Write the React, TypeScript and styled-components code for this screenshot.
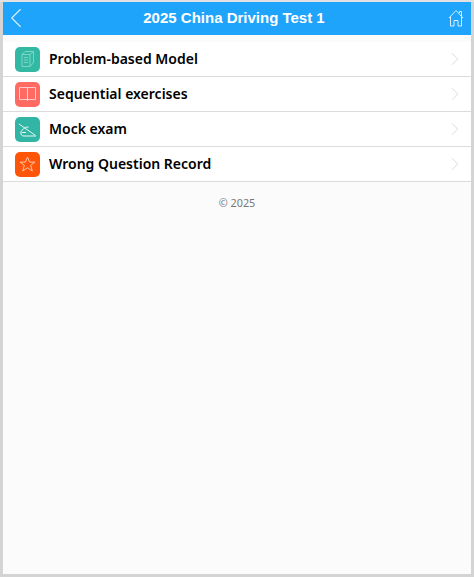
import React from 'react'
import styled, { createGlobalStyle } from 'styled-components'
import { ChevronLeft, ChevronRight } from 'lucide-react'

const BLUE = '#1fa4fc'
const LINE = '#dcdcdc'

const GlobalStyle = createGlobalStyle`
  html, body {
    margin: 0;
    padding: 0;
    height: 100%;
    background: #f1f1f1;
  }
  #root {
    height: 100%;
  }
`

const Frame = styled.div`
  box-sizing: border-box;
  width: 474px;
  height: 577px;
  padding: 0 3px 3px 3px;
  background: #d4d4d4;
  border-top: 2px solid #e2e2e2;
  overflow: hidden;
`

const Page = styled.div`
  height: 100%;
  display: flex;
  flex-direction: column;
  background: #fbfbfb;
`

const Header = styled.header`
  box-sizing: border-box;
  height: 33px;
  flex: none;
  display: flex;
  align-items: center;
  justify-content: space-between;
  padding: 0 3px 2px 1px;
  background: ${BLUE};
`

const Title = styled.h1`
  margin: 0 0 0 -4px;
  font: bold 15px 'Liberation Sans', Arial, sans-serif;
  color: #fff;
`

const HeaderButton = styled.span`
  width: 24px;
  height: 24px;
  display: flex;
  align-items: center;
  justify-content: center;
  color: #d8efff;
`

const BackArrow = styled(ChevronLeft)`
  flex: none;
`

const Menu = styled.ul`
  list-style: none;
  margin: 7px 0 0;
  padding: 0;
  background: #fff;
`

const Row = styled.li`
  box-sizing: border-box;
  height: 35px;
  display: flex;
  align-items: center;
  gap: 9px;
  padding: 0 5px 0 12px;
  border-bottom: 1px solid ${LINE};
`

const IconTile = styled.span<{ $bg: string }>`
  width: 25px;
  height: 25px;
  flex: none;
  display: block;
  border-radius: 5px;
  background: ${({ $bg }) => $bg};
`

const Label = styled.span`
  flex: 1;
  padding-bottom: 1px;
  font: 600 14px 'Noto Sans', 'Open Sans', sans-serif;
  color: #000;
`

const Arrow = styled(ChevronRight)`
  flex: none;
  color: #cfcfcf;
`

const Copyright = styled.footer`
  margin-top: 13px;
  text-align: center;
  font: 10.8px 'Noto Sans', 'Open Sans', sans-serif;
  color: #777;
`

const HomeIcon = () => (
  <svg width="18" height="18" viewBox="0 0 18 18" fill="none" stroke="currentColor" strokeWidth="1">
    <path d="M2 9 9 1.5 16 9M12.5 4V2.5H14.5V7" />
    <path d="M3.5 8V17H7V11.5H11V17H14.5V8" />
  </svg>
)

const BlocksIcon = () => (
  <svg width="25" height="25" viewBox="0 0 25 25" fill="none" stroke="#86d8c9" strokeWidth="0.9">
    <path d="M7 7.5 10 4.5H18.5V15.5L15 19.5H7ZM7 7.5H15V19.5M15 7.5 18.5 4.5" />
    <path d="M9 10.5H13M9 13H13M9 15.5H13" />
  </svg>
)

const BookIcon = () => (
  <svg width="25" height="25" viewBox="0 0 25 25" fill="none" stroke="#ffd5d1" strokeWidth="0.9">
    <path d="M4.5 5.5H12.5V17.5H4.5ZM12.5 5.5H20.5V17.5H12.5ZM12.5 17.5V19" />
  </svg>
)

const ExamIcon = () => (
  <svg width="25" height="25" viewBox="0 0 25 25" fill="none" stroke="#e4f7f3" strokeWidth="1">
    <path d="M4 7 20.5 18.5" />
    <path d="M8 12.5C6 13.5 5.5 15 6 17C6.5 18.5 7.5 19 9 19H21" />
    <path d="M8 12.5C9 10.5 11 9.8 13.5 10.2M6.5 15.5H11" />
  </svg>
)

const StarIcon = () => (
  <svg width="25" height="25" viewBox="0 0 25 25" fill="none" stroke="#ffc4a8" strokeWidth="1">
    <path d="M12.5 5 14.6 10.1H20L15.7 13.3 17.3 19 12.5 15.7 7.7 19 9.3 13.3 5 10.1H10.4Z" />
  </svg>
)

const ITEMS = [
  { label: 'Problem-based Model', bg: '#33b8a4', icon: <BlocksIcon /> },
  { label: 'Sequential exercises', bg: '#ff6b62', icon: <BookIcon /> },
  { label: 'Mock exam', bg: '#33b5a6', icon: <ExamIcon /> },
  { label: 'Wrong Question Record', bg: '#ff5508', icon: <StarIcon /> },
]

export default function App() {
  return (
    <Frame>
      <GlobalStyle />
      <Page>
        <Header>
          <HeaderButton>
            <BackArrow size={34} strokeWidth={0.8} />
          </HeaderButton>
          <Title>2025 China Driving Test 1</Title>
          <HeaderButton>
            <HomeIcon />
          </HeaderButton>
        </Header>
        <Menu>
          {ITEMS.map((item) => (
            <Row key={item.label}>
              <IconTile $bg={item.bg}>{item.icon}</IconTile>
              <Label>{item.label}</Label>
              <Arrow size={22} strokeWidth={0.8} />
            </Row>
          ))}
        </Menu>
        <Copyright>© 2025</Copyright>
      </Page>
    </Frame>
  )
}
